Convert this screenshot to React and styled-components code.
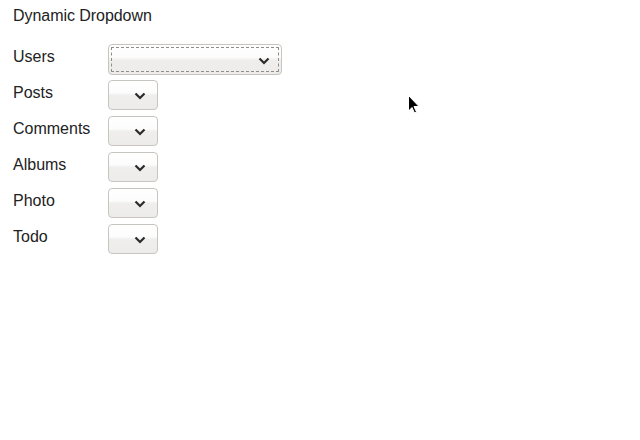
import React from "react";
import styled, { createGlobalStyle } from "styled-components";

const Global = createGlobalStyle`
  html, body { margin: 0; padding: 0; background: #fff; }
  body { font-family: "Liberation Sans", Arial, sans-serif; color: #222; }
`;

const Page = styled.div`
  position: relative;
  width: 640px;
  height: 440px;
  padding: 7px 13px;
  box-sizing: border-box;
`;

const Title = styled.div`
  font-size: 16px;
  line-height: 18px;
  margin: 0 0 19px;
  letter-spacing: -0.05px;
`;

const Rows = styled.div`
  display: flex;
  flex-direction: column;
  gap: 5px;
`;

const Row = styled.div`
  display: flex;
  align-items: flex-start;
  height: 31px;
`;

const Label = styled.label`
  width: 95px;
  font-size: 16px;
  line-height: 18px;
  margin-top: 4px;
`;

const SelectWrap = styled.div`
  position: relative;
  width: ${(p) => (p.$wide ? 174 : 50)}px;
  height: ${(p) => (p.$wide ? 31 : 30)}px;
`;

const Select = styled.select`
  appearance: none;
  -webkit-appearance: none;
  width: 100%;
  height: 100%;
  box-sizing: border-box;
  border: 1px solid #c8c5c1;
  border-radius: 4px;
  background: linear-gradient(to bottom, #ffffff 0%, #fcfcfc 42%, #efeeec 52%, #edecea 100%);
  font-family: inherit;
  font-size: 14px;
  color: #222;
  outline: ${(p) => (p.$focused ? "1px dashed #8f8d8a" : "none")};
  outline-offset: -4px;
  margin: 0;
  padding: 0 8px;
`;

const Chevron = styled.svg`
  position: absolute;
  right: 12px;
  top: 50%;
  margin-top: -3px;
  pointer-events: none;
`;

const Cursor = styled.svg`
  position: absolute;
  left: 408px;
  top: 95px;
`;

const items = [
  { label: "Users", wide: true },
  { label: "Posts" },
  { label: "Comments" },
  { label: "Albums" },
  { label: "Photo" },
  { label: "Todo" },
];

export default function App() {
  return (
    <Page>
      <Global />
      <Title>Dynamic Dropdown</Title>
      <Rows>
        {items.map((it) => (
          <Row key={it.label}>
            <Label>{it.label}</Label>
            <SelectWrap $wide={it.wide}>
              <Select $focused={it.wide} defaultValue="">
                <option value=""></option>
              </Select>
              <Chevron width="12" height="8" viewBox="0 0 12 8">
                <path d="M1.5 1.5 L6 6 L10.5 1.5" fill="none" stroke="#2b2b2b" strokeWidth="2.2" />
              </Chevron>
            </SelectWrap>
          </Row>
        ))}
      </Rows>
      <Cursor width="12" height="19" viewBox="0 0 12 19">
        <path d="M0.5 0.5 L0.5 16 L4 12.5 L6.5 18 L8.5 17 L6 11.5 L11 11.5 Z" fill="#000" stroke="#fff" strokeWidth="1" />
      </Cursor>
    </Page>
  );
}
